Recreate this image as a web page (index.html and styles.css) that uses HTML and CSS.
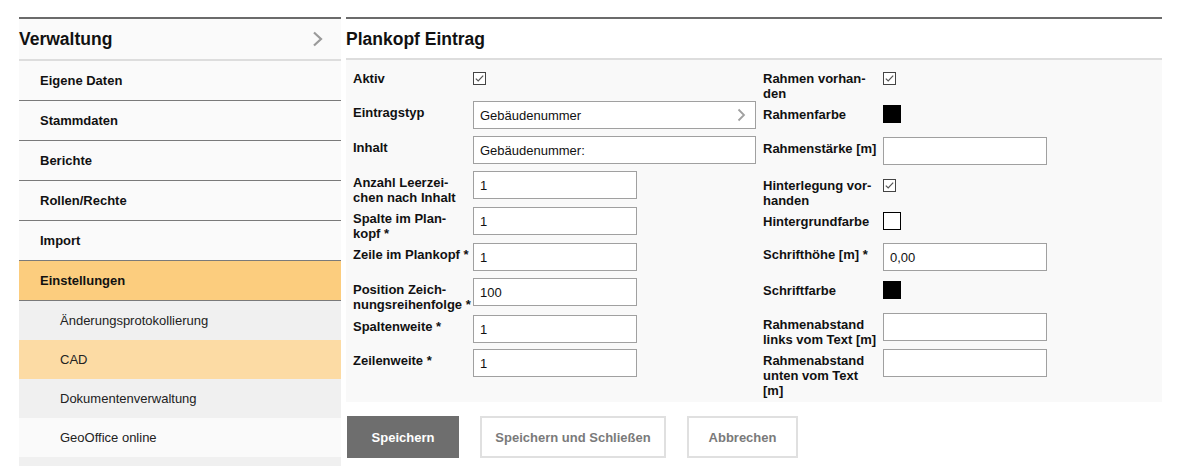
FILE: index.html
```html
<!DOCTYPE html>
<html lang="de">
<head>
    <meta charset="UTF-8">
    <title>Plankopf Eintrag</title>
    <link rel="stylesheet" href="styles.css">
</head>
<body>
<div class="page">
    <div class="sidebar">
        <div class="side-head">
            <span>Verwaltung</span>
            <svg class="chev" width="12" height="16" viewBox="0 0 12 16"><path d="M2 1.5 L9 8 L2 14.5" fill="none" stroke="#9a9a9a" stroke-width="2.2"/></svg>
        </div>
        <a class="item" href="#">Eigene Daten</a>
        <a class="item" href="#">Stammdaten</a>
        <a class="item" href="#">Berichte</a>
        <a class="item" href="#">Rollen/Rechte</a>
        <a class="item" href="#">Import</a>
        <a class="item active" href="#">Einstellungen</a>
        <a class="sub" href="#">Änderungsprotokollierung</a>
        <a class="sub current" href="#">CAD</a>
        <a class="sub" href="#">Dokumentenverwaltung</a>
        <a class="sub light" href="#">GeoOffice online</a>
        <a class="sub" href="#"></a>
    </div>
    <div class="main">
        <h2 class="title">Plankopf Eintrag</h2>
        <div class="form">
            <div class="col col-left">
                <div class="row check">
                    <label>Aktiv</label>
                    <span class="cb"><svg width="13" height="13" viewBox="0 0 13 13"><rect x="0.5" y="0.5" width="12" height="12" fill="#fff" stroke="#444"/><path d="M2.8 6.6 L5.2 9 L10.2 3.6" fill="none" stroke="#555" stroke-width="1.2"/></svg></span>
                </div>
                <div class="row">
                    <label>Eintragstyp</label>
                    <div class="select">
                        <span>Gebäudenummer</span>
                        <svg width="9" height="14" viewBox="0 0 9 14"><path d="M1.5 1.5 L7 7 L1.5 12.5" fill="none" stroke="#a0a0a0" stroke-width="1.8"/></svg>
                    </div>
                </div>
                <div class="row">
                    <label>Inhalt</label>
                    <input class="long" type="text" value="Gebäudenummer:">
                </div>
                <div class="row">
                    <label>Anzahl Leerzei-<br>chen nach Inhalt</label>
                    <input type="text" value="1">
                </div>
                <div class="row">
                    <label>Spalte im Plan-<br>kopf *</label>
                    <input type="text" value="1">
                </div>
                <div class="row">
                    <label>Zeile im Plankopf *</label>
                    <input type="text" value="1">
                </div>
                <div class="row">
                    <label>Position Zeich-<br>nungsreihenfolge *</label>
                    <input type="text" value="100">
                </div>
                <div class="row">
                    <label>Spaltenweite *</label>
                    <input type="text" value="1">
                </div>
                <div class="row">
                    <label>Zeilenweite *</label>
                    <input type="text" value="1">
                </div>
            </div>
            <div class="col col-right">
                <div class="row check">
                    <label>Rahmen vorhan-<br>den</label>
                    <span class="cb"><svg width="13" height="13" viewBox="0 0 13 13"><rect x="0.5" y="0.5" width="12" height="12" fill="#fff" stroke="#444"/><path d="M2.8 6.6 L5.2 9 L10.2 3.6" fill="none" stroke="#555" stroke-width="1.2"/></svg></span>
                </div>
                <div class="row swatch-row">
                    <label>Rahmenfarbe</label>
                    <span class="swatch"></span>
                </div>
                <div class="row">
                    <label>Rahmenstärke [m]</label>
                    <input type="text" value="">
                </div>
                <div class="row check">
                    <label>Hinterlegung vor-<br>handen</label>
                    <span class="cb"><svg width="13" height="13" viewBox="0 0 13 13"><rect x="0.5" y="0.5" width="12" height="12" fill="#fff" stroke="#444"/><path d="M2.8 6.6 L5.2 9 L10.2 3.6" fill="none" stroke="#555" stroke-width="1.2"/></svg></span>
                </div>
                <div class="row swatch-row">
                    <label>Hintergrundfarbe</label>
                    <span class="swatch white"></span>
                </div>
                <div class="row">
                    <label>Schrifthöhe [m] *</label>
                    <input type="text" value="0,00">
                </div>
                <div class="row swatch-row">
                    <label>Schriftfarbe</label>
                    <span class="swatch"></span>
                </div>
                <div class="row">
                    <label>Rahmenabstand<br>links vom Text [m]</label>
                    <input type="text" value="">
                </div>
                <div class="row">
                    <label>Rahmenabstand<br>unten vom Text<br>[m]</label>
                    <input type="text" value="">
                </div>
            </div>
        </div>
        <div class="buttons">
            <button class="btn primary">Speichern</button>
            <button class="btn">Speichern und Schließen</button>
            <button class="btn">Abbrechen</button>
        </div>
    </div>
</div>
</body>
</html>
```

FILE: styles.css
```css
* { box-sizing: border-box; }
html, body {
    overflow: hidden;
}
body {
    margin: 0;
    font-family: "Liberation Sans", Arial, sans-serif;
    font-size: 13px;
    color: #111;
    background: #fff;
}
.page {
    display: flex;
    gap: 5px;
    height: 466px;
    overflow: hidden;
    padding: 17px 0 0 19px;
}
.sidebar {
    width: 322px;
    border-top: 2px solid #6b6b6b;
    background-color: #fafafa;
}
.side-head {
    display: flex;
    align-items: center;
    justify-content: space-between;
    height: 42px;
    padding-right: 17px;
    border-bottom: 2px solid #dddddd;
    font-size: 17.5px;
    font-weight: bold;
}
.side-head .chev {
    margin-top: -1px;
}
.item, .sub {
    display: flex;
    align-items: center;
    text-decoration: none;
    color: #111;
}
.item {
    height: 40px;
    padding-left: 21px;
    font-weight: bold;
    border-bottom: 1px solid #7a7a7a;
}
.item.active {
    background-color: #fccd7e;
}
.sub {
    height: 39px;
    padding-left: 41px;
    background-color: #f0f0f0;
    color: #222;
}
.sub.current {
    background-color: #fcdba4;
}
.sub.light {
    background-color: #fafafa;
}
.main {
    width: 816px;
    border-top: 2px solid #6b6b6b;
}
.title {
    margin: 0;
    height: 41px;
    line-height: 41px;
    font-size: 17.5px;
    font-weight: bold;
    border-bottom: 2px solid #dddddd;
}
.form {
    display: flex;
    background-color: #f9f9f9;
    padding: 10px 0 1px 7px;
    height: 342px;
}
.col {
    display: grid;
    grid-template-columns: 120px auto;
}
.col-left {
    width: 410px;
    grid-template-rows: 31px 35px 35px 36px 36px 35px 37px 34px auto;
}
.col-right {
    grid-template-rows: 35px 32px 40px 35px 31px 38px 32px 36px auto;
}
.row {
    display: contents;
}
.row label {
    display: block;
    padding-top: 4px;
    font-weight: bold;
    line-height: 15px;
    white-space: nowrap;
}
.row.check label {
    padding-top: 1px;
}
.row.swatch-row label {
    padding-top: 2px;
}
.cb {
    display: block;
    height: 13px;
    margin-top: 2px;
}
.cb svg {
    display: block;
}
input {
    display: block;
    width: 164px;
    height: 28px;
    margin: 0;
    padding: 0 6px;
    border: 1px solid #a0a0a0;
    background: #fff;
    font-family: "Liberation Sans", Arial, sans-serif;
    font-size: 13px;
    color: #111;
}
input.long {
    width: 283px;
}
.select {
    display: flex;
    align-items: center;
    justify-content: space-between;
    width: 283px;
    height: 28px;
    padding: 0 9px 0 6px;
    border: 1px solid #a0a0a0;
    background: #fff;
}
.swatch {
    display: block;
    width: 18px;
    height: 18px;
    background-color: #000;
}
.swatch.white {
    background-color: #fff;
    border: 1px solid #000;
}
.buttons {
    display: flex;
    gap: 21px;
    padding: 14px 0 0 1px;
}
.btn {
    height: 42px;
    padding: 0;
    border: 2px solid #e0e0e0;
    background: #fff;
    color: #7a7a7a;
    font-family: "Liberation Sans", Arial, sans-serif;
    font-size: 13px;
    font-weight: bold;
    width: 111px;
}
.btn:nth-child(2) {
    width: 186px;
}
.btn.primary {
    width: 112px;
    border: none;
    background-color: #6e6e6e;
    color: #fff;
}
```
